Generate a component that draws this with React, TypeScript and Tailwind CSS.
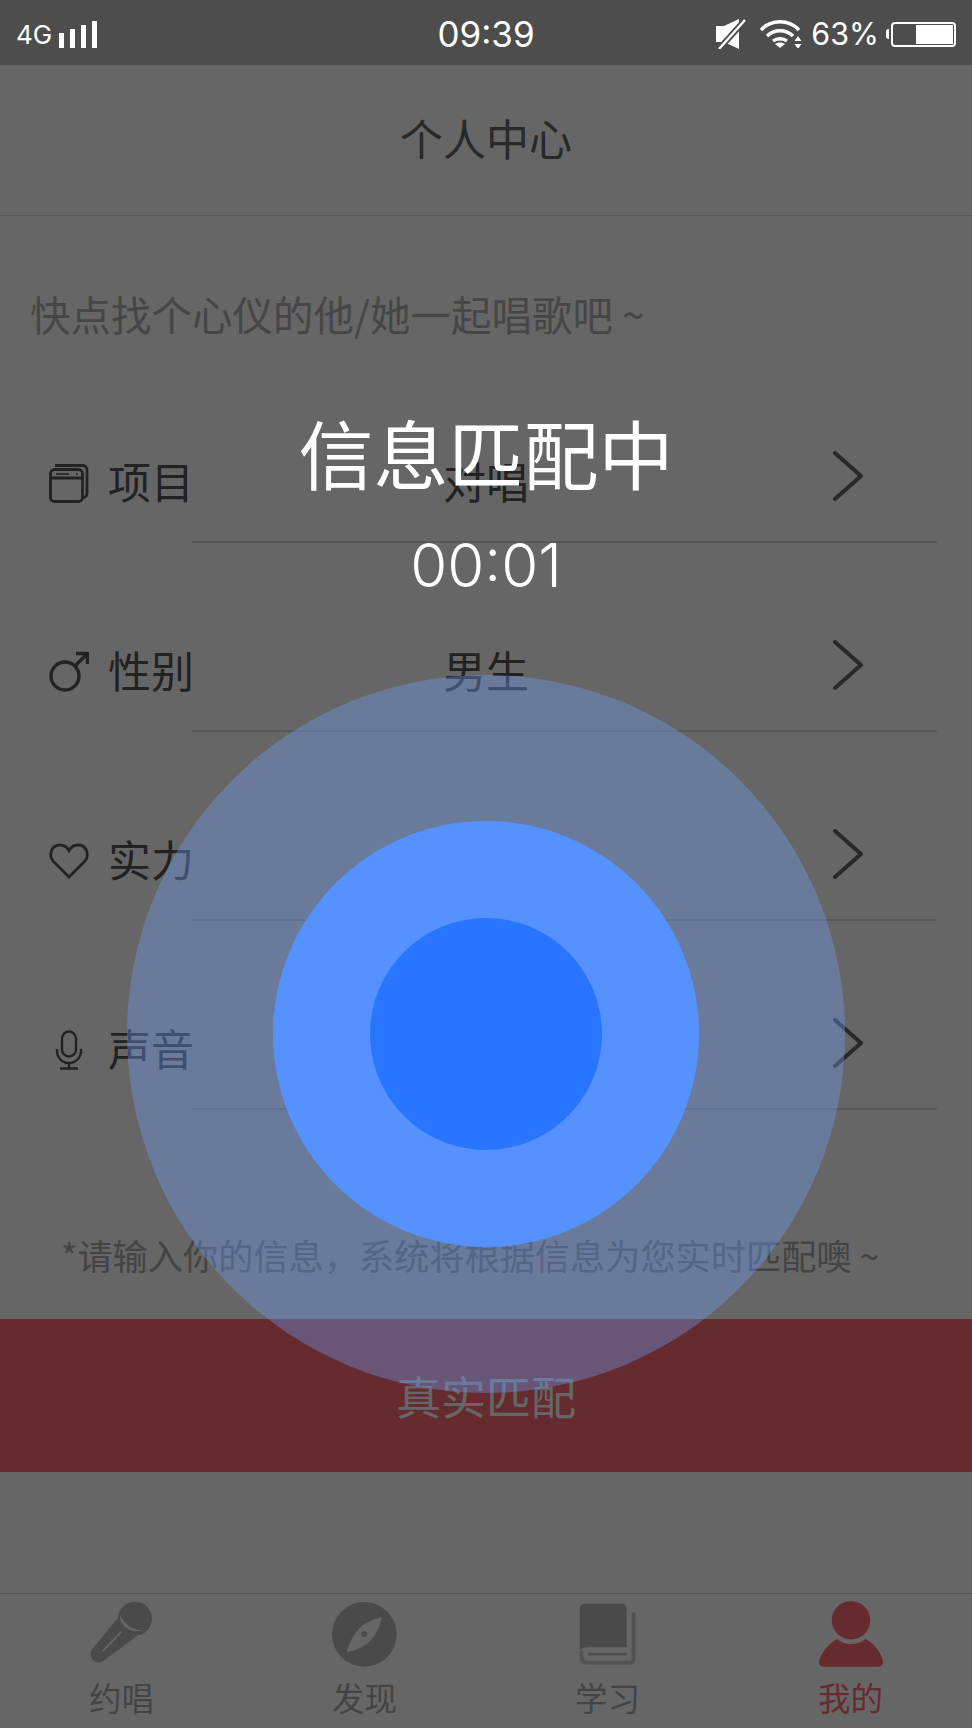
const rows = [
  { label: "项目", value: "对唱", icon: <ProjectIcon /> },
  { label: "性别", value: "男生", icon: <MaleIcon /> },
  { label: "实力", value: "", icon: <HeartIcon /> },
  { label: "声音", value: "", icon: <VoiceIcon /> },
];

function ProjectIcon() {
  return (
    <svg width="40" height="40" viewBox="0 0 40 40" fill="none" stroke="#555" strokeWidth="2.8">
      <rect x="1.5" y="6.5" width="32" height="32" rx="4" />
      <path d="M2 15h31M6 2.5h28a4 4 0 0 1 4 4v24a4 4 0 0 1-4 4" />
      <path d="M7 11h13M27 11h2" strokeWidth="1.6" />
    </svg>
  );
}

function MaleIcon() {
  return (
    <svg width="40" height="41" viewBox="0 0 40 41" fill="none" stroke="#555" strokeWidth="3.4">
      <circle cx="16" cy="25" r="14" />
      <path d="M26 15 38 3M27 2.500h11.500V13" />
    </svg>
  );
}

function HeartIcon() {
  return (
    <svg width="40" height="36" viewBox="0 0 40 36" fill="none" stroke="#555" strokeWidth="2.8">
      <path d="M20 34 4.500 18.500C-.5 13.500 1.500 2 11 2c4 0 7 2 9 5.500C22 4 25 2 29 2c9.500 0 11.500 11.500 6.500 16.500z" />
    </svg>
  );
}

function VoiceIcon() {
  return (
    <svg width="40" height="40" viewBox="0 0 40 40" fill="none" stroke="#555" strokeWidth="2.4">
      <rect x="13" y="1.500" width="14" height="25" rx="7" />
      <path d="M8 19v2a12 12 0 0 0 24 0v-2M20 33v5M11 38.500h18" />
    </svg>
  );
}

function Chevron() {
  return (
    <svg width="30" height="50" viewBox="0 0 30 50" fill="none" stroke="#666" strokeWidth="4" strokeLinecap="round" strokeLinejoin="round">
      <path d="M2 2 28 25 2 48" />
    </svg>
  );
}

function MicTab() {
  return (
    <svg width="64" height="66" viewBox="90 36 192 198" fill="#b9b9b9">
      <path d="M178 82 97 180Q85 200 100 215 118 228 135 212L232 140z" />
      <circle cx="225" cy="89" r="51" />
      <path d="M180 78C176 106 205 132 246 125 216 122 192 105 180 78z" fill="#fff" />
      <path d="M130 185 182 130" stroke="#fff" strokeWidth="6" strokeLinecap="round" />
    </svg>
  );
}

function CompassTab() {
  return (
    <svg width="65" height="65" viewBox="816 33 195 195">
      <circle cx="913" cy="130" r="97" fill="#b9b9b9" />
      <path d="M965 78C960 110 950 130 925 155 905 170 885 178 860 183 868 155 880 130 905 105 925 90 945 85 965 78z" fill="#fff" />
      <circle cx="913" cy="130" r="9" fill="#b9b9b9" />
    </svg>
  );
}

function BookTab() {
  return (
    <svg width="57" height="62" viewBox="88 36 172 188">
      <path d="M105 38H218a14 14 0 0 1 14 14V170H115Q97 170 90 180V53a15 15 0 0 1 15-15z" fill="#b9b9b9" />
      <path d="M253 70V208a9 9 0 0 1-9 9H112a17 17 0 0 1-17-17V185" fill="none" stroke="#cfcfcf" strokeWidth="12" strokeLinecap="round" />
      <path d="M115 191H232" stroke="#c4c4c4" strokeWidth="9" />
    </svg>
  );
}

function PersonTab() {
  return (
    <svg width="64" height="66" viewBox="807 33 190 195" fill="#fc6b75">
      <circle cx="902" cy="90" r="57" />
      <path d="M862 145C880 165 925 165 945 145 975 160 993 190 997 212 998 222 990 228 982 228H822C813 228 806 222 807 212 812 190 832 160 862 145z" />
    </svg>
  );
}

const tabs = [
  { label: "约唱", icon: <MicTab />, active: false },
  { label: "发现", icon: <CompassTab />, active: false },
  { label: "学习", icon: <BookTab />, active: false },
  { label: "我的", icon: <PersonTab />, active: true },
];

export default function App() {
  return (
    <div className="relative h-[1728px] w-[972px] overflow-hidden bg-white font-['Noto_Sans_CJK_SC',sans-serif]">
      {/* page under the dim layer */}
      <div className="flex h-full flex-col">
        <div className="h-[65px] shrink-0" />
        <header className="flex h-[151px] shrink-0 items-center justify-center border-b border-[#ddd] pb-[6px] text-[43px] leading-none text-[#666]">
          个人中心
        </header>
        <p className="h-[138px] shrink-0 pl-[30px] pt-[74px] text-[40.5px] leading-[48px] text-[#b0b0b0]">
          快点找个心仪的他/她一起唱歌吧 ~
        </p>
        {rows.map((r) => (
          <div key={r.label} className="shrink-0">
            <div className="grid h-[187px] grid-cols-3 items-center px-[49px] pt-[66px]">
              <div className="flex items-center">
                <span className="flex w-[40px] justify-center pt-[4px]">{r.icon}</span>
                <span className="ml-[19px] text-[43px] leading-none text-[#555]">{r.label}</span>
              </div>
              <span className="text-center text-[43px] leading-none text-[#555]">{r.value}</span>
              <span className="flex justify-end pb-[10px] pr-[60px]">
                <Chevron />
              </span>
            </div>
            <div className="ml-[192px] mr-[35px] h-[2px] bg-[#ddd]" />
          </div>
        ))}
        <p className="flex h-[209px] shrink-0 items-center pl-[61px] pt-[81px] text-[35.2px] leading-none text-[#aaa]">
          *请输入你的信息，系统将根据信息为您实时匹配噢 ~
        </p>
        <button className="flex h-[153px] shrink-0 items-center justify-center bg-[#fc6b75] text-[45px] leading-none text-white">
          真实匹配
        </button>
        <div className="flex-1" />
        <nav className="grid h-[135px] shrink-0 grid-cols-4 border-t border-[#ccc]">
          {tabs.map((t) => (
            <div key={t.label} className="flex flex-col items-center pt-[7px]">
              <div className="flex h-[66px] items-center">{t.icon}</div>
              <span className={"mt-[14px] text-[32.5px] leading-none " + (t.active ? "text-[#fc6b75]" : "text-[#aaa]")}>
                {t.label}
              </span>
            </div>
          ))}
        </nav>
      </div>

      {/* matching overlay */}
      <div className="absolute inset-0 flex flex-col items-center bg-black/60 pt-[409px] text-white">
        <div className="text-[75px] leading-[86px]">信息匹配中</div>
        <div className="mt-[36px] font-['Inter',sans-serif] text-[60px] font-light leading-[68px]">00:01</div>
        <div className="mt-[76px] flex h-[718px] w-[718px] items-center justify-center rounded-full bg-[rgba(113,157,243,0.37)]">
          <div className="flex h-[426px] w-[426px] items-center justify-center rounded-full bg-[#5592ff]">
            <div className="h-[232px] w-[232px] rounded-full bg-[#2a75ff]" />
          </div>
        </div>
      </div>

      {/* status bar */}
      <div className="absolute inset-x-0 top-0 flex h-[65px] items-center justify-between bg-[#4d4d4d] pl-[16px] pr-[16px] pt-[3px] font-['Inter',sans-serif] text-white">
        <div className="flex items-end">
          <span className="text-[26px] leading-none">4G</span>
          <span className="ml-[7px] flex h-[27px] items-end gap-[6px]">
            <span className="h-[15px] w-[5px] bg-white" />
            <span className="h-[19px] w-[5px] bg-white" />
            <span className="h-[23px] w-[5px] bg-white" />
            <span className="h-[27px] w-[5px] bg-white" />
          </span>
        </div>
        <span className="absolute left-1/2 -translate-x-1/2 text-[35px] leading-none">09:39</span>
        <div className="flex items-center">
          <svg width="30" height="30" viewBox="0 0 30 30" fill="white">
            <path d="M0 7h8L23 0v30L8 23H0z" />
            <path d="M3 30 29 1" stroke="#4d4d4d" strokeWidth="6" />
            <path d="M3 30 29 1" stroke="white" strokeWidth="2.4" />
          </svg>
          <svg className="ml-[14px]" width="42" height="28" viewBox="0 0 42 28" fill="none" stroke="white" strokeWidth="3.4">
            <path d="M1 10C11 -1 29 -1 39 10M7 16c7-7 19-7 26 0M13 21c4-3 10-3 14 0" />
            <path d="M20 28l-5-4c3-2 7-2 10 0z" fill="white" stroke="none" />
            <path d="M38 16l3.500 5h-7zM38 29l3.500-5h-7z" fill="white" stroke="none" />
          </svg>
          <span className="ml-[9px] text-[30.5px] leading-none">63%</span>
          <span className="ml-[7px] h-[10px] w-[3px] rounded-l-sm bg-white" />
          <span className="ml-[2px] flex h-[25px] w-[65px] justify-end rounded-[4px] border-2 border-white p-px">
            <span className="h-full w-[37px] bg-white" />
          </span>
        </div>
      </div>
    </div>
  );
}
